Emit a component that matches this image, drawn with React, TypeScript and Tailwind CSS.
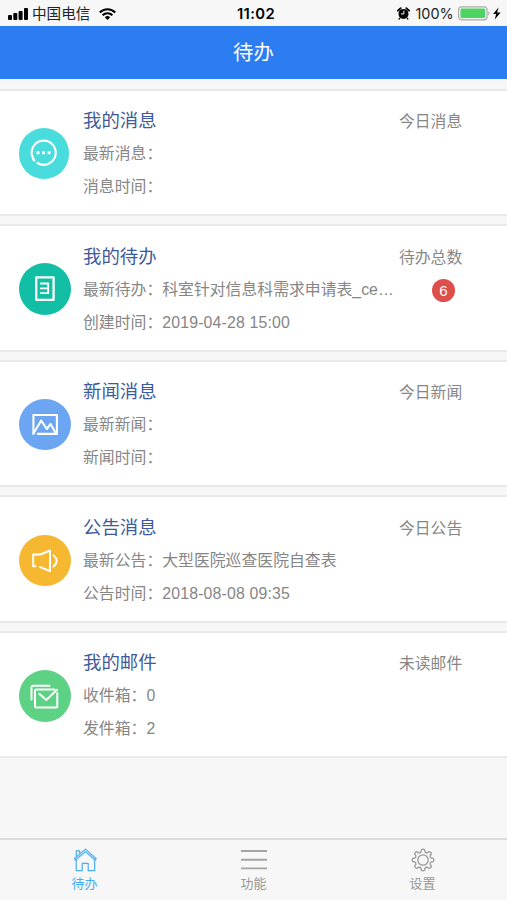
import React from 'react';

type Entry = {
  title: string;
  aside: string;
  lines: [string, string][];
  badge?: number;
  color: string;
  size: string;
  icon: React.ReactNode;
};

const entries: Entry[] = [
  {
    title: '我的消息',
    aside: '今日消息',
    lines: [['最新消息：', ''], ['消息时间：', '']],
    color: 'bg-[#48dcdc]',
    size: 'w-[50px] h-[51px]',
    icon: (
      <>
        <path d="M14.6 30.9A12.4 12.4 0 1 1 19 35.5" strokeWidth="2.2" />
        <path d="M14.6 30.9l1 1.9" strokeWidth="2.6" />
        <path d="M19.6 23.5v3M25.3 23.5v3M31 23.5v3" strokeWidth="3" strokeLinecap="butt" />
      </>
    ),
  },
  {
    title: '我的待办',
    aside: '待办总数',
    lines: [['最新待办：', '科室针对信息科需求申请表_ce…'], ['创建时间：', '2019-04-28 15:00']],
    badge: 6,
    color: 'bg-[#12bfa5]',
    size: 'w-[51.5px] h-[51.5px]',
    icon: (
      <>
        <rect x="17.2" y="14.4" width="17.4" height="22.4" strokeWidth="2.3" />
        <path d="M21.8 20.5h7M21.8 25.3h7.5M21.8 30.2h7M29.2 20.5v9.7" strokeWidth="1.8" />
      </>
    ),
  },
  {
    title: '新闻消息',
    aside: '今日新闻',
    lines: [['最新新闻：', ''], ['新闻时间：', '']],
    color: 'bg-[#6ca6f3]',
    size: 'w-[51.5px] h-[51.5px]',
    icon: (
      <>
        <path d="M18.8 34.9H37.9V16H14.4V34.9" strokeWidth="2.1" />
        <path d="M14.6 34.3L22.2 21.5l5.6 8.5 3.8-5 4.8 8.5" strokeWidth="2.1" />
      </>
    ),
  },
  {
    title: '公告消息',
    aside: '今日公告',
    lines: [['最新公告：', '大型医院巡查医院自查表'], ['公告时间：', '2018-08-08 09:35']],
    color: 'bg-[#f6b830]',
    size: 'w-[51.5px] h-[51.5px]',
    icon: (
      <>
        <path d="M16.4 31.2H14.2V19.5H21.4L31 15.5V36.2L21 32" strokeWidth="2" />
        <path d="M34.6 20.4Q41 25.8 34.6 31.4" strokeWidth="2" />
      </>
    ),
  },
  {
    title: '我的邮件',
    aside: '未读邮件',
    lines: [['收件箱：', '0'], ['发件箱：', '2']],
    color: 'bg-[#5dd284]',
    size: 'w-[51.5px] h-[51.5px]',
    icon: (
      <>
        <path d="M12.5 29.5V17.2Q12.5 15.7 14 15.7H30.5" strokeWidth="2" />
        <path d="M35.5 19.5H17.4Q16 19.5 16 20.8V35.9Q16 37.4 17.5 37.4H36.8Q38.3 37.4 38.3 35.9V23" strokeWidth="2" />
        <path d="M20.2 23.7L27.3 29.9L38 19.8" strokeWidth="2" />
      </>
    ),
  },
];

function StatusBar() {
  return (
    <header className="flex h-[25.5px] shrink-0 items-center bg-[#f7f7f7] pt-[2px] pl-2 text-black">
      <svg className="mt-px h-3 w-5" viewBox="0 0 20 12">
        <rect x="0" y="7" width="4" height="5" rx="1" />
        <rect x="5.3" y="5" width="4" height="7" rx="1" />
        <rect x="10.6" y="3" width="4" height="9" rx="1" />
        <rect x="16" y="0" width="4" height="12" rx="1" />
      </svg>
      <span className="ml-[4px] w-[59px] text-[14.6px] leading-5 text-[#222]">中国电信</span>
      <svg className="ml-[8px] h-3 w-[17px]" viewBox="0 0 17 12" fill="none" stroke="#000" strokeWidth="2.1">
        <path d="M.8 4.5a10.8 10.8 0 0 1 15.4 0M3.6 7.3a6.9 6.9 0 0 1 9.8 0" />
        <path d="M8.5 12L5.8 9.3a3.8 3.8 0 0 1 5.4 0z" fill="#000" stroke="none" />
      </svg>
      <span className="ml-[121px] w-[40px] font-[Inter,sans-serif] text-[14.8px] leading-5 font-semibold tracking-[0.35px]">11:02</span>
      <svg className="ml-[119.5px] h-[13px] w-[13px]" viewBox="0 0 13 13">
        <circle cx="6.5" cy="6.9" r="5" />
        <path d="M.9 3.7L3.7 1.1M12.1 3.7L9.3 1.1" stroke="#000" strokeWidth="1.8" strokeLinecap="round" />
        <path d="M3 11l-1.2 1.4M10 11l1.2 1.4" stroke="#000" strokeWidth="1.4" />
        <path d="M4 6.9h2.9V3.7" stroke="#fff" strokeWidth="1" fill="none" />
      </svg>
      <span className="ml-[6px] w-[42px] font-[Inter,sans-serif] text-[14.4px] leading-5 text-[#222]">100%</span>
      <svg className="h-[15px] w-[44px]" viewBox="0 0 44 15">
        <rect x=".6" y=".8" width="28.4" height="13" rx="3" fill="#f7f7f7" stroke="#a9a9a9" strokeWidth="1.2" />
        <rect x="2.5" y="2.6" width="24.6" height="9.5" rx="1.3" fill="#4bd45f" />
        <path d="M30.3 5q2.6 2.3 0 4.6z" fill="#a9a9a9" />
        <path d="M40.6 1.4L35 8.1h3.1l-1.3 5.4 5.8-7.1h-3.5z" fill="#000" />
      </svg>
    </header>
  );
}

function Card({ entry }: { entry: Entry }) {
  return (
    <section className="flex h-[127.6px] shrink-0 border-t-2 border-b-2 border-[#e9e9e9] bg-white pl-[19px]">
      <div className="w-16 shrink-0 pt-[37.3px]">
        <div className={`rounded-full ${entry.color} ${entry.size}`}>
          <svg className="h-full w-full" viewBox="0 0 51.5 51.5" fill="none" stroke="#fff" strokeLinecap="round" strokeLinejoin="round">
            {entry.icon}
          </svg>
        </div>
      </div>
      <div className="w-[316px] shrink-0 pt-[13.6px]">
        <h2 className="text-[18.4px] leading-[33px] text-[#3e5a99]">{entry.title}</h2>
        {entry.lines.map(([label, value]) => (
          <p key={label} className="text-[15.85px] leading-[33px] whitespace-nowrap text-[#868686]">
            {label}
            <span className={/^\d/.test(value) ? 'tracking-[0.17px]' : ''}>{value}</span>
          </p>
        ))}
      </div>
      <div className="pt-[14.6px] text-[15.8px] leading-[33px] text-[#868686]">
        <p>{entry.aside}</p>
        {entry.badge !== undefined && (
          <span className="mt-[5px] ml-[33px] flex h-[23px] w-[23px] items-center justify-center rounded-full bg-[#dd4f4a] text-[15px] leading-none text-white">
            {entry.badge}
          </span>
        )}
      </div>
    </section>
  );
}

// Outline of the eight-toothed gear, centred on (12, 12).
const gearPath =
  Array.from({ length: 8 }, (_, i) => {
    const at = (r: number, deg: number) => {
      const a = ((i * 45 + deg - 90) * Math.PI) / 180;
      return `${(12 + r * Math.cos(a)).toFixed(2)} ${(12 + r * Math.sin(a)).toFixed(2)}`;
    };
    return `${i === 0 ? 'M' : 'L'}${at(8.3, -14)}L${at(10.4, -9)}Q${at(11.6, 0)} ${at(10.4, 9)}L${at(8.3, 14)}Q${at(7.5, 22.5)} ${at(8.3, 31)}`;
  }).join('') + 'Z';

function TabBar() {
  return (
    <nav className="mt-auto grid h-[62px] shrink-0 grid-cols-3 border-t-2 border-[#dddddd] bg-[#f7f7f7] text-[13px] leading-5 text-[#999]">
      <div className="flex flex-col items-center pt-[7px] text-[#46adf0]">
        <svg className="h-[26px] w-[26px]" viewBox="0 0 26 26" fill="none" stroke="currentColor" strokeWidth="1.2" strokeLinejoin="round">
          <path d="M2.3 11.7L13.5 2.1L24.2 11.7L23 13L13.5 4.6L3.5 13Z" />
          <path d="M4.2 12.5V23.7H10.2V16.3H16.2V23.7H22.7V12.5" />
          <path d="M4.3 9.6V3.8H7.7V6.8" />
        </svg>
        <span className="mt-px">待办</span>
      </div>
      <div className="flex flex-col items-center pt-[7px]">
        <svg className="h-[26px] w-[26px]" viewBox="0 0 26 26" stroke="#a3a3a3" strokeWidth="1.9">
          <path d="M0 4h26M0 12.7h26M0 21.4h26" />
        </svg>
        <span className="mt-px">功能</span>
      </div>
      <div className="flex flex-col items-center pt-[7px]">
        <svg className="h-[26px] w-[26px]" viewBox="0 0 26 26" fill="none" stroke="#999" strokeWidth="1.3" strokeLinejoin="round">
          <g transform="translate(1 1)">
            <path d={gearPath} />
            <circle cx="12" cy="12" r="5.2" />
          </g>
        </svg>
        <span className="mt-px">设置</span>
      </div>
    </nav>
  );
}

export default function App() {
  return (
    <div className="flex h-screen flex-col overflow-hidden bg-[#f7f7f7] font-['Liberation_Sans','Noto_Sans_CJK_SC',sans-serif]">
      <StatusBar />
      <div className="flex h-[53.5px] shrink-0 items-center justify-center bg-[#2d7df2] pt-[2px] text-[20.4px] text-white">
        <h1>待办</h1>
      </div>
      <main className="flex flex-col gap-2 pt-[9.5px]">
        {entries.map((entry) => (
          <Card key={entry.title} entry={entry} />
        ))}
      </main>
      <TabBar />
    </div>
  );
}
